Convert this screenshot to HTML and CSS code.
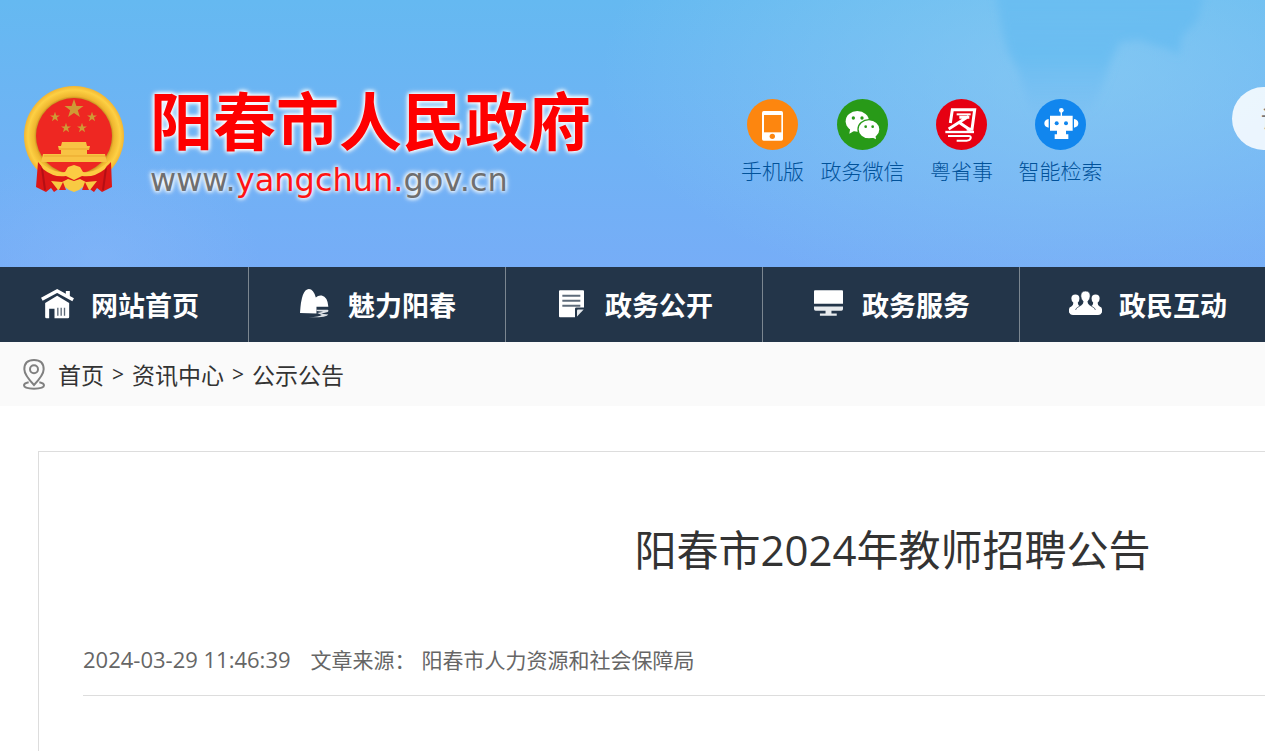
FILE: index.html
```html
<!DOCTYPE html>
<html lang="zh-CN">
<head>
    <meta charset="UTF-8">
    <meta name="viewport" content="width=device-width, initial-scale=1.0">
    <title>阳春市2024年教师招聘公告</title>
    <link rel="stylesheet" href="styles.css">
</head>
<body>
    <header class="header">
        <!-- patch of open sky between the clouds -->
        <svg class="sky" width="240" height="130" viewBox="0 0 240 130" aria-hidden="true">
            <defs>
                <linearGradient id="sky" x1="0" y1="0" x2="0" y2="1">
                    <stop offset="0" stop-color="#62baf1" stop-opacity=".6"/>
                    <stop offset=".5" stop-color="#62baf1" stop-opacity=".7"/>
                    <stop offset="1" stop-color="#70b8f3" stop-opacity="0"/>
                </linearGradient>
                <filter id="soft"><feGaussianBlur stdDeviation="4"/></filter>
            </defs>
            <path d="M15-10L22 30 28 52 38 70 44 92 52 115 90 125 115 105 125 80 132 58 140 42 160 40 176 46 188 48 198 56 202 36 218 20 225-10z" fill="url(#sky)" filter="url(#soft)"/>
        </svg>
        <a class="logo" href="#">
            <svg class="emblem" viewBox="0 0 100 108" aria-hidden="true">
                <defs>
                    <radialGradient id="gold" cx="50%" cy="50%" r="50%">
                        <stop offset="74%" stop-color="#b9831f"/>
                        <stop offset="80%" stop-color="#efb62f"/>
                        <stop offset="92%" stop-color="#fdd044"/>
                        <stop offset="100%" stop-color="#f3b632"/>
                    </radialGradient>
                    <path id="star" d="M0-10 2.4-3.1 9.5-3.1 3.8 1.2 5.9 8.1 0 4-5.9 8.1-3.8 1.2-9.5-3.1-2.4-3.1z"/>
                </defs>
                <circle cx="50" cy="50" r="50" fill="url(#gold)"/>
                <circle cx="50" cy="50" r="38" fill="#ee2722"/>
                <g fill="#cf9a35">
                    <use href="#star" transform="translate(50 23)"/>
                    <use href="#star" transform="translate(31 31) scale(.52)"/>
                    <use href="#star" transform="translate(68 31) scale(.52)"/>
                    <use href="#star" transform="translate(42 42) scale(.52)"/>
                    <use href="#star" transform="translate(58 42) scale(.52)"/>
                </g>
                <path d="M38 56h24l1 4h3l-1 4h-2v4h18l2 8H17l2-8h18v-4h-2l-1-4h3z" fill="#f8c344"/>
                <path d="M35 63h30M20 70h61" stroke="#e9a72d" stroke-width="1"/>
                <path d="M14 76Q26 91 50 89 74 91 87 76L88 101 78 106 73 102 70 106 60 99H40L30 106 27 102 22 106 12 101z" fill="#dc1717"/>
                <path d="M18 82l3 22M82 82l-3 22" stroke="#b50f14" stroke-width="2"/>
                <path d="M14 74Q28 88 41 86L44 81 50 79 56 81 59 86Q72 88 86 74L81 83Q70 92 58 90L50 94 42 90Q30 92 19 83z" fill="#fccc43"/>
                <path d="M27 95l11 1 6-3 6 2 6-2 6 3 11-1-7 9-7-3-4 3-5 2-5-2-4-3-7 3z" fill="#f8ca43"/>
                <path d="M39 96l-4 8h7zM61 96l4 8h-7z" fill="#e01f1a"/>
            </svg>
            <span class="logo-text">
                <strong class="site-name">阳春市人民政府</strong>
                <span class="site-url">www.<em>yangchun.</em>gov.cn</span>
            </span>
        </a>
        <ul class="quick">
            <li><a href="#">
                <svg viewBox="0 0 153 153" aria-hidden="true">
                    <circle cx="76.5" cy="76.5" r="76.5" fill="#fd860f"/>
                    <rect x="45" y="36" width="63" height="89" rx="5" fill="#fff"/>
                    <rect x="51" y="48" width="52" height="52" fill="#fd860f"/>
                    <circle cx="76" cy="112" r="8" fill="#fd860f"/>
                </svg>
                手机版</a></li>
            <li><a href="#">
                <svg viewBox="0 0 153 153" aria-hidden="true">
                    <circle cx="76.5" cy="76.5" r="76.5" fill="#289a18"/>
                    <ellipse cx="61" cy="67" rx="35" ry="31" fill="#fff"/>
                    <path d="M40 86l-3 18 18-10z" fill="#fff"/>
                    <ellipse cx="96" cy="91" rx="33" ry="29" fill="#fff" stroke="#289a18" stroke-width="4"/>
                    <path d="M103 114l14 7-2-14z" fill="#fff"/>
                    <g fill="#289a18">
                        <circle cx="49" cy="57" r="5"/><circle cx="75" cy="57" r="5"/>
                        <circle cx="86" cy="83" r="4"/><circle cx="107" cy="83" r="4"/>
                    </g>
                </svg>
                政务微信</a></li>
            <li><a href="#">
                <svg viewBox="0 0 153 153" aria-hidden="true">
                    <circle cx="76.5" cy="76.5" r="76.5" fill="#e60012"/>
                    <g fill="none" stroke="#fff">
                        <path d="M43 72L49 32H116L108 91H92" stroke-width="9"/>
                        <path d="M62 46h42" stroke-width="6"/>
                        <path d="M38 90L98 52M70 55h30M72 72l32 22" stroke-width="9"/>
                        <path d="M28 99h86" stroke-width="7"/>
                        <path d="M36 111h62q8 0 6 7t-12 7H62" stroke-width="6"/>
                    </g>
                </svg>
                粤省事</a></li>
            <li><a href="#">
                <svg viewBox="0 0 153 153" aria-hidden="true">
                    <circle cx="76.5" cy="76.5" r="76.5" fill="#1186ee"/>
                    <g fill="#fff">
                        <circle cx="79" cy="34" r="7"/>
                        <path d="M77 36h4v16h-4zM45 50h68v45H93v11h7v14H59v-14h7V95H45z"/>
                        <path d="M41 60v26Q28 84 28 73T41 60zM117 60v26Q130 84 130 73T117 60z"/>
                    </g>
                    <circle cx="65" cy="73" r="6" fill="#1186ee"/>
                    <circle cx="93" cy="73" r="6" fill="#1186ee"/>
                </svg>
                智能检索</a></li>
        </ul>
        <form class="search">
            <input type="text" aria-label="站内搜索" placeholder="请输入关键字">
        </form>
    </header>

    <nav class="nav">
        <a href="#">
            <span class="nav-icon">
                <svg width="33" height="30" viewBox="0 0 98 90" aria-hidden="true">
                    <path d="M12 42L48 20 84 42v42q0 4-4 4H40V59H24v29h-8q-4 0-4-4z" fill="#fff"/>
                    <path d="M2 31L48 6 96 32" fill="none" stroke="#fff" stroke-width="10"/>
                    <path d="M74 6h12v18l-12-6z" fill="#fff"/>
                    <path d="M50 56v24M60 56v24M70 56v24" stroke="#5b6877" stroke-width="4"/>
                </svg>
            </span>
            网站首页
        </a>
        <a href="#">
            <span class="nav-icon">
                <svg width="29" height="29" viewBox="0 0 88 88" aria-hidden="true">
                    <path d="M0 73Q4 0 27 0q14 0 21 26Q56 18 66 20q18 4 20 34H50v20z" fill="#fff"/>
                    <path d="M50 63h34q5 3 0 7l-20 5 22 2q-4 10-60 9 34-2 40-7l-14-6 18-4-20-2z" fill="#dde1e5"/>
                </svg>
            </span>
            魅力阳春
        </a>
        <a href="#">
            <span class="nav-icon">
                <svg width="25" height="28" viewBox="0 0 75 83" aria-hidden="true">
                    <path d="M3 0h69q3 0 3 3v49H52q-4 0-4 4v25H3q-3 0-3-3V3q0-3 3-3z" fill="#fff"/>
                    <path d="M54 79V61q0-3 3-3h17z" fill="#e4e8eb"/>
                    <path d="M10 17h54M10 32h54M10 47h54" stroke="#5d6b7a" stroke-width="6"/>
                </svg>
            </span>
            政务公开
        </a>
        <a href="#">
            <span class="nav-icon">
                <svg width="29" height="27" viewBox="0 0 88 80" aria-hidden="true">
                    <path d="M3 0h82q3 0 3 3v38H0V3q0-3 3-3z" fill="#fff"/>
                    <path d="M0 49h88v8q0 5-5 5H53v8h16v7H18v-7h17v-8H5q-5 0-5-5z" fill="#e8ebee"/>
                </svg>
            </span>
            政务服务
        </a>
        <a href="#">
            <span class="nav-icon">
                <svg width="33" height="25" viewBox="0 0 98 74" aria-hidden="true">
                    <g fill="#fff">
                        <path d="M7 22q0-12 12-12t12 12q0 8-5 13 0 8 8 12v20H8Q0 67 0 60v-6q0-6 7-8 6-3 6-11-6-5-6-13z"/>
                        <path d="M91 22q0-12-12-12T67 22q0 8 5 13 0 8-8 12v20h26q8 0 8-7v-6q0-6-7-8-6-3-6-11 6-5 6-13z"/>
                        <path d="M35 15Q35 0 49 0t14 15q0 9-7 16 0 9 9 13 13 5 15 15H18q2-10 15-15 9-4 9-13-7-7-7-16z" stroke="#233549" stroke-width="2"/>
                        <path d="M1 56h96v6q-1 9-11 9H12Q2 71 1 62z"/>
                    </g>
                </svg>
            </span>
            政民互动
        </a>
    </nav>

    <div class="crumbs">
        <svg width="22" height="31" viewBox="0 0 66 93" aria-hidden="true">
            <g fill="none" stroke="#808080" stroke-width="6">
                <path d="M33 78Q4 48 4 31 4 3 33 3t29 28Q62 48 33 78z"/>
                <circle cx="33" cy="31" r="12"/>
                <path d="M17 70Q3 73 3 79q0 10 30 10t30-10q0-6-14-9"/>
            </g>
        </svg>
        <a href="#">首页</a>
        <span>&gt;</span>
        <a href="#">资讯中心</a>
        <span>&gt;</span>
        <a href="#">公示公告</a>
    </div>

    <main class="main">
        <article class="article">
            <h1>阳春市2024年教师招聘公告</h1>
            <div class="meta">
                <time datetime="2024-03-29T11:46:39">2024-03-29 11:46:39</time>
                <span>文章来源：</span>
                <span>阳春市人力资源和社会保障局</span>
            </div>
        </article>
    </main>
</body>
</html>
```
FILE: styles.css
```css
* {
    box-sizing: border-box;
}
body {
    margin: 0;
    font-family: "Open Sans", "Noto Sans CJK SC", sans-serif;
    color: #333;
    background: #fff;
    overflow: hidden;
}
a {
    color: inherit;
    text-decoration: none;
}

/* header */
.header {
    position: relative;
    display: flex;
    align-items: flex-start;
    height: 267px;
    padding: 86px 0 0 24px;
    overflow: hidden;
    background:
        radial-gradient(ellipse 480px 240px at 1080px 70px, rgba(150, 212, 242, 0.55), transparent),
        radial-gradient(ellipse 160px 120px at 100px 260px, rgba(134, 184, 248, 0.5), transparent),
        linear-gradient(#65b9f1, #70b2f5 60%, #76adf7);
}
.sky {
    position: absolute;
    top: 0;
    left: 980px;
}
.logo {
    display: flex;
    flex: none;
    gap: 26px;
}
.emblem {
    width: 100px;
    height: 108px;
}
.logo-text {
    display: flex;
    flex-direction: column;
    text-shadow: 0 0 4px #fff, 0 0 4px #fff, 0 0 6px #fff;
}
.site-name {
    font-size: 63px;
    line-height: 70px;
    color: #fe0000;
}
.site-url {
    font-family: "DejaVu Sans", sans-serif;
    font-size: 32px;
    line-height: 48px;
    color: #6f6f6f;
}
.site-url em {
    font-style: normal;
    color: #fe1414;
}
.quick {
    position: relative;
    display: flex;
    flex: none;
    margin: 13px 0 0 141px;
    padding: 0;
    list-style: none;
}
.quick li {
    width: 99px;
}
.quick li:first-child {
    width: 81px;
}
.quick a {
    display: flex;
    flex-direction: column;
    align-items: center;
    gap: 6px;
    font-size: 21px;
    line-height: 30px;
    font-weight: 300;
    color: #01529a;
}
.quick svg {
    width: 51px;
    height: 51px;
}
.search {
    flex: none;
    margin: 1px 0 0 122px;
}
.search input {
    width: 420px;
    height: 63px;
    padding: 0 29px;
    border: 0;
    border-radius: 32px;
    background: rgba(255, 255, 255, 0.85);
    font: inherit;
    font-size: 24px;
}
.search input::placeholder {
    color: #757575;
}

/* main menu */
.nav {
    display: flex;
    height: 75px;
    overflow: hidden;
    background: #233549;
}
.nav a {
    display: flex;
    flex: none;
    align-items: center;
    padding: 3px 49px 0 48px;
    border-right: 1px solid #7b8690;
    font-size: 27px;
    font-weight: bold;
    line-height: 72px;
    color: #fff;
}
.nav a:first-child {
    padding-left: 40px;
}
.nav a:last-child {
    padding-right: 0;
    border-right: 0;
}
.nav-icon {
    display: flex;
    justify-content: center;
    width: 34px;
    margin: 0 17px 5px 0;
}

/* breadcrumb */
.crumbs {
    display: flex;
    align-items: center;
    height: 64px;
    padding-left: 23px;
    background: #fafafa;
    font-size: 23px;
}
.crumbs svg {
    margin-right: 13px;
}
.crumbs span {
    margin: 0 8px;
    font-size: 21px;
}

/* article, wider than a small window */
.main {
    min-width: 1785px;
    padding: 45px 38px 0;
}
.article {
    min-height: 300px;
    padding: 63px 44px 0;
    border: 1px solid #ddd;
    border-bottom: 0;
}
.article h1 {
    margin: 0;
    font-size: 42px;
    font-weight: 400;
    line-height: 70px;
    text-align: center;
}
.meta {
    display: flex;
    align-items: center;
    height: 74px;
    margin-top: 37px;
    border-bottom: 1px solid #ddd;
    font-size: 21px;
    color: #666;
}
.meta time {
    margin-right: 20px;
    font-size: 22px;
}
.meta span {
    margin-right: 6px;
}
```
